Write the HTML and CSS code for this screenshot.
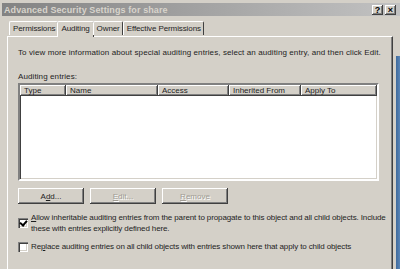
FILE: index.html
```html
<!DOCTYPE html>
<html lang="en">
<head>
  <meta charset="UTF-8">
  <title>Advanced Security Settings for share</title>
  <link rel="stylesheet" href="styles.css">
</head>
<body>

  <div class="titlebar">
    <span class="title">Advanced Security Settings for share</span>
    <div class="title-buttons">
      <span class="tbtn">?</span>
      <span class="tbtn">&#215;</span>
    </div>
  </div>

  <div class="client">
    <div class="frame">
      <div class="tabs">
        <div class="tab">Permissions</div>
        <div class="tab active">Auditing</div>
        <div class="tab">Owner</div>
        <div class="tab">Effective Permissions</div>
      </div>

      <div class="panel">
        <p class="intro">To view more information about special auditing entries, select an auditing entry, and then click Edit.</p>

        <p class="list-label">Auditing entries:</p>
        <div class="listview">
          <div class="list-header">
            <span class="col col-type">Type</span>
            <span class="col col-name">Name</span>
            <span class="col col-access">Access</span>
            <span class="col col-inherited">Inherited From</span>
            <span class="col col-apply">Apply To</span>
          </div>
        </div>

        <div class="buttons">
          <button class="btn">A<u>d</u>d...</button>
          <button class="btn" disabled><u>E</u>dit...</button>
          <button class="btn" disabled><u>R</u>emove</button>
        </div>

        <label class="check">
          <span class="box checked"></span>
          <span class="check-text"><u>A</u>llow inheritable auditing entries from the parent to propagate to this object and all child objects. Include<br>these with entries explicitly defined here.</span>
        </label>

        <label class="check">
          <span class="box"></span>
          <span class="check-text">Re<u>p</u>lace auditing entries on all child objects with entries shown here that apply to child objects</span>
        </label>
      </div>
    </div>
    <div class="edge"></div>
  </div>

</body>
</html>
```

FILE: styles.css
```css
body {
  margin: 0;
  padding: 3px 0 0 2px;
  background-color: #d4d0c8;
  font-family: "Liberation Sans", Arial, sans-serif;
  font-size: 8px;
  letter-spacing: 0.1px;
  color: #1e1e1e;
  overflow: hidden;
  height: 266px;
}
.titlebar {
  height: 13px;
  display: flex;
  align-items: center;
  justify-content: space-between;
  padding: 0 4px 0 2px;
  background: linear-gradient(to right, #838383, #c2c2c2);
}
.title {
  color: #d8d4cc;
  font-weight: bold;
  font-size: 9px;
  letter-spacing: 0.1px;
}
.title-buttons {
  display: flex;
  gap: 2px;
}
.tbtn {
  width: 11px;
  height: 10px;
  background-color: #d4d0c8;
  box-shadow: inset -1px -1px #404040, inset 1px 1px #ffffff, inset -2px -2px #808080;
  font-size: 9px;
  font-weight: bold;
  line-height: 10px;
  text-align: center;
  color: #000;
}
.client {
  display: flex;
  height: 253px;
}
.frame {
  width: 386px;
  padding: 4px 0 0 5px;
}
.edge {
  flex: 1;
  margin-top: 40px;
  border-left: 3px solid #d4d0c8;
  background: linear-gradient(to right, #3f6a9c, #5a86b8);
}
.tabs {
  display: flex;
  padding-left: 2px;
  height: 16px;
  align-items: flex-end;
  position: relative;
  z-index: 1;
}
.tab {
  height: 13px;
  padding: 0 2px 0 3px;
  line-height: 13px;
  letter-spacing: -0.1px;
  border: 1px solid #ffffff;
  border-right-color: #404040;
  border-bottom: none;
  border-radius: 2px 2px 0 0;
  margin-bottom: 1px;
}
.tab.active {
  height: 15px;
  padding: 0 3px;
  margin: 0 -1px -1px;
  line-height: 13px;
  background-color: #d4d0c8;
}
.panel {
  height: 240px;
  padding: 0 10px;
  border-top: 1px solid #ffffff;
  border-left: 1px solid #ffffff;
  border-right: 1px solid #404040;
  box-shadow: inset -1px 0 #808080;
}
.intro {
  margin: 10px 0 0;
  line-height: 11px;
}
.list-label {
  margin: 14px 0 0;
  line-height: 10px;
}
.listview {
  margin: 1px 3px 0 0;
  height: 94px;
  background-color: #ffffff;
  border: 2px solid;
  border-color: #808080 #ffffff #ffffff #808080;
  box-shadow: inset 1px 1px #404040, inset -1px -1px #d4d0c8;
}
.list-header {
  display: flex;
  height: 12px;
}
.col {
  height: 11px;
  line-height: 11px;
  padding-left: 4px;
  letter-spacing: 0;
  background-color: #d4d0c8;
  box-shadow: inset -1px -1px #404040, inset 1px 1px #ffffff, inset -2px -2px #808080;
}
.col-type { width: 42px; }
.col-name { width: 88px; }
.col-access { width: 67px; }
.col-inherited { width: 68px; }
.col-apply { flex: 1; }
.buttons {
  display: flex;
  gap: 6px;
  margin-top: 7px;
}
.btn {
  width: 66px;
  height: 16px;
  padding: 0;
  border: none;
  background-color: #d4d0c8;
  box-shadow: inset -1px -1px #404040, inset 1px 1px #ffffff, inset -2px -2px #808080;
  font-family: inherit;
  font-size: 8px;
  color: #1e1e1e;
}
.btn:disabled {
  color: #a09c94;
  text-shadow: 1px 1px #ffffff;
}
.check {
  display: flex;
  gap: 3px;
  align-items: center;
  margin: 8px -10px 0 0;
  line-height: 11px;
}
.check + .check {
  margin-top: 7px;
}
.check-text {
  white-space: nowrap;
  letter-spacing: -0.12px;
}
.box {
  flex: none;
  width: 10px;
  height: 10px;
  background-color: #ffffff;
  box-shadow: inset 1px 1px #808080, inset 2px 2px #404040, inset -1px -1px #ffffff, inset -2px -2px #d4d0c8;
  position: relative;
}
.box.checked::after {
  content: "";
  position: absolute;
  left: 3px;
  top: 1px;
  width: 3px;
  height: 5px;
  border: solid #000;
  border-width: 0 2px 2px 0;
  transform: rotate(40deg);
}
```
